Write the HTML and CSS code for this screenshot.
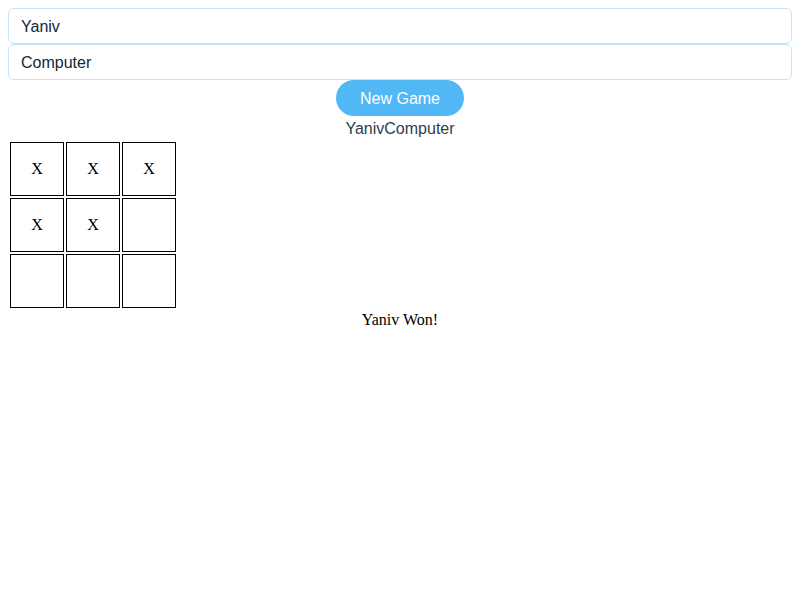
FILE: index.html
```html
<!DOCTYPE html>
<html>
<head>
<meta charset="utf-8">
<link rel="stylesheet" href="styles.css">
</head>
<body>
<div class="app">
  <input class="name-input" type="text" value="Yaniv">
  <input class="name-input" type="text" value="Computer">
  <div class="actions"><button class="new-game">New Game</button></div>
  <div class="players"><span>Yaniv</span><span>Computer</span></div>
  <table class="board">
    <tr><td>X</td><td>X</td><td>X</td></tr>
    <tr><td>X</td><td>X</td><td></td></tr>
    <tr><td></td><td></td><td></td></tr>
  </table>
  <div class="result">Yaniv Won!</div>
</div>
</body>
</html>
```
FILE: styles.css
```css
body {
  margin: 8px;
  font-family: "Liberation Serif", serif;
  font-size: 16px;
  background: #fff;
}
.name-input {
  display: block;
  box-sizing: border-box;
  width: 100%;
  height: 36px;
  margin: 0;
  padding: 2px 12px 0;
  border: 1px solid #c3e3fb;
  border-radius: 6px;
  font-family: "Liberation Sans", Arial, sans-serif;
  font-size: 16px;
  color: #14263a;
  outline: none;
}
.actions {
  display: flex;
  justify-content: center;
}
.new-game {
  width: 128px;
  height: 36px;
  border: none;
  border-radius: 18px;
  background: #51b8f5;
  color: #fff;
  font-family: "Liberation Sans", Arial, sans-serif;
  font-size: 16px;
  padding: 2px 0 0;
}
.players {
  text-align: center;
  font-family: "Liberation Sans", Arial, sans-serif;
  font-size: 16px;
  color: #2c3e50;
  height: 23px;
  padding-top: 1px;
  line-height: 24px;
}
.board {
  border-spacing: 2px;
  border-collapse: separate;
}
.board td {
  width: 52px;
  height: 52px;
  padding: 0;
  border: 1px solid #000;
  text-align: center;
  vertical-align: middle;
  font-family: "Liberation Serif", serif;
  font-size: 16px;
  color: #000;
}
.result {
  text-align: center;
  line-height: 20px;
  color: #000;
}
```
